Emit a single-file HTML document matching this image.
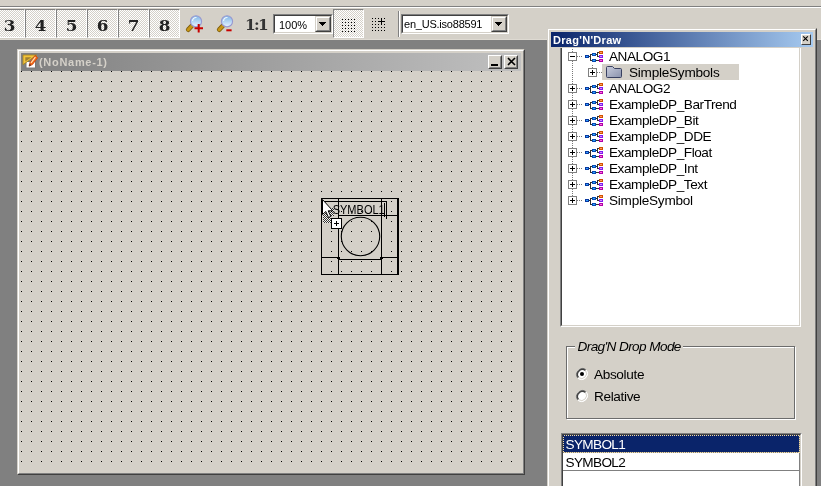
<!DOCTYPE html>
<html><head><meta charset="utf-8"><title>Drag'N'Draw</title>
<style>
html,body{margin:0;padding:0;background:#808080;}
body{width:821px;height:486px;overflow:hidden;position:relative;background:#808080;font-family:"Liberation Sans",sans-serif;font-size:11px;color:#000;}
div,span,i,b{box-sizing:border-box;}
.abs{position:absolute;}
#toolbar{position:absolute;left:0;top:0;width:821px;height:40px;background:#d4d0c8;}
#tbline1{position:absolute;left:0;top:6px;width:821px;height:1px;background:#808080;}
#tbline2{position:absolute;left:0;top:7px;width:821px;height:1px;background:#fff;}
#tbline3{position:absolute;left:0;top:39px;width:821px;height:1px;background:#dedad2;}
.tbtn{position:absolute;top:9px;width:31px;height:29px;border:1px solid;border-color:#808080 #fff #fff #808080;
 background-image:repeating-conic-gradient(#fff 0 25%,#d4d0c8 0 50%);background-size:2px 2px;}
.tbtn span{position:absolute;left:0;top:6px;width:29px;transform:scaleX(1.12);text-align:center;font-family:"DejaVu Serif","Liberation Serif",serif;font-weight:bold;font-size:15px;line-height:20px;color:#222;}
#oneone{position:absolute;left:245.3px;top:15px;width:22px;transform:scaleX(1.1);text-align:center;font-family:"DejaVu Serif","Liberation Serif",serif;font-weight:bold;font-size:14px;line-height:20px;color:#333;letter-spacing:-1.5px;white-space:nowrap;}
.combo{position:absolute;top:14px;height:20px;background:#fff;border:1px solid;border-color:#808080 #fff #fff #808080;}
.combo .in{position:absolute;left:0;top:0;right:0;bottom:0;border:1px solid;border-color:#404040 #d4d0c8 #d4d0c8 #404040;}
.combo .txt{position:absolute;left:4px;top:2px;font-size:11px;line-height:13px;white-space:nowrap;}
.combo .dd{position:absolute;right:1px;top:1px;width:16px;height:16px;background:#d4d0c8;border:1px solid;border-color:#d4d0c8 #404040 #404040 #d4d0c8;}
.combo .dd i{position:absolute;left:0;top:0;right:0;bottom:0;border:1px solid;border-color:#fff #808080 #808080 #fff;}
.combo .dd b{position:absolute;left:3px;top:5px;width:7px;height:4px;background:linear-gradient(#000,#000) 0 0/7px 1px no-repeat,linear-gradient(#000,#000) 1px 1px/5px 1px no-repeat,linear-gradient(#000,#000) 2px 2px/3px 1px no-repeat,linear-gradient(#000,#000) 3px 3px/1px 1px no-repeat;}
.sep{position:absolute;left:398px;top:11px;width:2px;height:26px;border-left:1px solid #808080;border-right:1px solid #fff;}
/* child window */
#child{position:absolute;left:17px;top:49px;width:508px;height:426px;background:#d4d0c8;border:1px solid;border-color:#d4d0c8 #404040 #404040 #d4d0c8;}
#child .fr{position:absolute;left:0;top:0;right:0;bottom:0;border:1px solid;border-color:#fff #808080 #808080 #fff;}
#ctitle{position:absolute;left:21px;top:53px;width:500px;height:18px;background:linear-gradient(to right,#808080,#c0c0c0);}
#ctitle .t{position:absolute;left:17.5px;top:2px;letter-spacing:0.7px;font-weight:bold;font-size:11px;line-height:14px;color:#d4d0c8;white-space:nowrap;}
.cbtn{position:absolute;top:2px;width:14px;height:14px;background:#d4d0c8;border:1px solid;border-color:#fff #404040 #404040 #fff;}
.cbtn i{position:absolute;left:0;top:0;right:0;bottom:0;border:1px solid;border-color:#d4d0c8 #808080 #808080 #d4d0c8;}
#canvas{position:absolute;left:21px;top:71px;width:500px;height:400px;background:#d4d0c8;}
/* panel */
#panel{position:absolute;left:547px;top:28px;width:270px;height:470px;background:#d4d0c8;border:1px solid;border-color:#d4d0c8 #404040 #404040 #d4d0c8;}
#panel .fr{position:absolute;left:0;top:0;right:0;bottom:0;border:1px solid;border-color:#fff #808080 #808080 #fff;}
#ptitle{position:absolute;left:551px;top:32px;width:262px;height:15px;background:linear-gradient(to right,#0a246a,#a6caf0);}
#ptitle .t{position:absolute;left:1.5px;top:2px;letter-spacing:0.3px;font-weight:bold;font-size:11px;line-height:13px;color:#fff;white-space:nowrap;}
#pclose{position:absolute;left:801px;top:34px;width:10px;height:11px;background:#d4d0c8;border:1px solid;border-color:#fff #404040 #404040 #fff;}
#tree{position:absolute;left:560px;top:48px;width:241px;height:279px;background:#fff;border-left:1px solid #808080;border-right:1px solid #fff;border-bottom:1px solid #fff;}
#tree .fr{position:absolute;left:0;top:0;right:0;bottom:0;border-left:1px solid #404040;border-right:1px solid #d4d0c8;border-bottom:1px solid #d4d0c8;}
.tl{position:absolute;font-size:13.6px;line-height:16px;height:16px;white-space:nowrap;letter-spacing:-0.45px;}
#hl{position:absolute;left:602px;top:64px;width:137px;height:16px;background:#d4d0c8;}
#gb{position:absolute;left:567px;top:347px;width:229px;height:73px;border:1px solid #fff;}
#gb i{position:absolute;left:-2px;top:-2px;right:0;bottom:0;border:1px solid #6c6c6c;}
#gbt{position:absolute;left:575px;top:339px;padding:0 2px 0 2.5px;background:#d4d0c8;font-style:italic;font-size:13.6px;line-height:16px;white-space:nowrap;letter-spacing:-0.6px;}
.rl{position:absolute;left:594px;font-size:13.6px;line-height:16px;white-space:nowrap;letter-spacing:-0.35px;}
#lb{position:absolute;left:561px;top:433px;width:241px;height:70px;background:#fff;border:1px solid;border-color:#808080 #fff #fff #808080;}
#lb .fr{position:absolute;left:0;top:0;right:0;bottom:0;border:1px solid;border-color:#404040 #d4d0c8 #d4d0c8 #404040;}
.lr{position:absolute;left:563px;width:237px;height:18px;font-size:13.6px;line-height:19px;padding-left:2.5px;border-bottom:1px solid #808080;border-right:1px solid #808080;white-space:nowrap;letter-spacing:-0.65px;}
#ov{position:absolute;left:0;top:0;width:821px;height:486px;}
.tl,.txt,.t,.rl,.lr,#gbt,.tbtn span,#oneone,#ov{will-change:transform;}
</style></head><body>

<div id="toolbar"><div id="tbline1"></div><div id="tbline2"></div><div id="tbline3"></div>
<div class="tbtn" style="left:-6px"><span>3</span></div>
<div class="tbtn" style="left:25px"><span>4</span></div>
<div class="tbtn" style="left:56px"><span>5</span></div>
<div class="tbtn" style="left:87px"><span>6</span></div>
<div class="tbtn" style="left:118px"><span>7</span></div>
<div class="tbtn" style="left:149px"><span>8</span></div>
<div id="oneone">1:1</div>
<div class="combo" style="left:273px;width:60px"><div class="in"></div><span class="txt" style="left:4.5px;top:4px">100%</span><div class="dd"><i></i><b></b></div></div>
<div class="tbtn" style="left:333px"></div>
<div class="sep"></div>
<div class="combo" style="left:401px;width:108px"><div class="in"></div><span class="txt" style="left:2px;top:3px;letter-spacing:-0.22px">en_US.iso88591</span><div class="dd"><i></i><b></b></div></div>
</div>
<div id="child"><div class="fr"></div></div>
<div id="ctitle"><span class="t">(NoName-1)</span><div class="cbtn" style="left:467px"><i></i></div><div class="cbtn" style="left:483px"><i></i></div></div>
<div id="canvas"></div>
<div id="panel"><div class="fr"></div></div>
<div id="ptitle"><span class="t">Drag'N'Draw</span></div><div id="pclose"></div>
<div id="tree"><div class="fr"></div></div>
<div id="hl"></div>
<div class="tl" style="left:609px;top:49px">ANALOG1</div>
<div class="tl" style="left:629px;top:65px;letter-spacing:-0.25px">SimpleSymbols</div>
<div class="tl" style="left:609px;top:81px">ANALOG2</div>
<div class="tl" style="left:609px;top:97px">ExampleDP_BarTrend</div>
<div class="tl" style="left:609px;top:113px">ExampleDP_Bit</div>
<div class="tl" style="left:609px;top:129px">ExampleDP_DDE</div>
<div class="tl" style="left:609px;top:145px">ExampleDP_Float</div>
<div class="tl" style="left:609px;top:161px">ExampleDP_Int</div>
<div class="tl" style="left:609px;top:177px">ExampleDP_Text</div>
<div class="tl" style="left:609px;top:193px;letter-spacing:-0.25px">SimpleSymbol</div>
<div id="gb"><i></i></div><div id="gbt">Drag'N Drop Mode</div>
<div class="rl" style="top:367px">Absolute</div><div class="rl" style="top:389px">Relative</div>
<div id="lb"><div class="fr"></div></div>
<div class="lr" style="top:435px;background:#0a246a;color:#fff">SYMBOL1</div>
<div class="lr" style="top:453px">SYMBOL2</div>
<div class="lr" style="top:471px"></div>
<svg id="ov" width="821" height="486" viewBox="0 0 821 486">
<defs><pattern id="grid" x="21" y="71" width="10" height="10" patternUnits="userSpaceOnUse"><rect x="0" y="0" width="1" height="1" fill="#000"/></pattern><pattern id="dith" x="0" y="0" width="2" height="2" patternUnits="userSpaceOnUse"><rect x="0" y="0" width="2" height="2" fill="#fff"/><rect x="0" y="0" width="1" height="1" fill="#000"/><rect x="1" y="1" width="1" height="1" fill="#000"/></pattern><linearGradient id="lens" x1="0" y1="0" x2="0" y2="1"><stop offset="0" stop-color="#7db4e6"/><stop offset="1" stop-color="#e8f4ff"/></linearGradient><linearGradient id="fold" x1="0" y1="0" x2="1" y2="1"><stop offset="0" stop-color="#c8ccdc"/><stop offset="1" stop-color="#8a92ac"/></linearGradient></defs>
<rect x="21" y="71" width="500" height="400" fill="url(#grid)" shape-rendering="crispEdges"/>
<g><line x1="192.0" y1="25.700000000000003" x2="188.2" y2="29.700000000000003" stroke="#7c5c0c" stroke-width="4.6" stroke-linecap="round"/><line x1="192.0" y1="25.700000000000003" x2="188.2" y2="29.700000000000003" stroke="#c89614" stroke-width="3" stroke-linecap="round"/><circle cx="196" cy="21.3" r="5.6" fill="url(#lens)" stroke="#9898d0" stroke-width="1.1"/><path d="M192.5 20.8 A3.8 3.8 0 0 1 196.5 17.5" stroke="#fff" stroke-width="1.2" fill="none" opacity="0.9"/>
<path d="M194.5 28.3H203M198.7 24V32.4" stroke="#c80000" stroke-width="2" fill="none"/></g>
<g><line x1="223.0" y1="25.700000000000003" x2="219.2" y2="29.700000000000003" stroke="#7c5c0c" stroke-width="4.6" stroke-linecap="round"/><line x1="223.0" y1="25.700000000000003" x2="219.2" y2="29.700000000000003" stroke="#c89614" stroke-width="3" stroke-linecap="round"/><circle cx="227" cy="21.3" r="5.6" fill="url(#lens)" stroke="#9898d0" stroke-width="1.1"/><path d="M223.5 20.8 A3.8 3.8 0 0 1 227.5 17.5" stroke="#fff" stroke-width="1.2" fill="none" opacity="0.9"/>
<path d="M226.3 30.3H231.6" stroke="#c80000" stroke-width="2" fill="none"/></g>
<g fill="#000" shape-rendering="crispEdges"><rect x="342" y="19" width="1" height="1"/><rect x="345" y="19" width="1" height="1"/><rect x="348" y="19" width="1" height="1"/><rect x="351" y="19" width="1" height="1"/><rect x="354" y="19" width="1" height="1"/><rect x="342" y="22" width="1" height="1"/><rect x="345" y="22" width="1" height="1"/><rect x="348" y="22" width="1" height="1"/><rect x="351" y="22" width="1" height="1"/><rect x="354" y="22" width="1" height="1"/><rect x="342" y="25" width="1" height="1"/><rect x="345" y="25" width="1" height="1"/><rect x="348" y="25" width="1" height="1"/><rect x="351" y="25" width="1" height="1"/><rect x="354" y="25" width="1" height="1"/><rect x="342" y="28" width="1" height="1"/><rect x="345" y="28" width="1" height="1"/><rect x="348" y="28" width="1" height="1"/><rect x="351" y="28" width="1" height="1"/><rect x="354" y="28" width="1" height="1"/><rect x="342" y="31" width="1" height="1"/><rect x="345" y="31" width="1" height="1"/><rect x="348" y="31" width="1" height="1"/><rect x="351" y="31" width="1" height="1"/><rect x="354" y="31" width="1" height="1"/></g>
<g fill="#000" shape-rendering="crispEdges"><rect x="372" y="18" width="1" height="1"/><rect x="375" y="18" width="1" height="1"/><rect x="378" y="18" width="1" height="1"/><rect x="384" y="18" width="1" height="1"/><rect x="372" y="21" width="1" height="1"/><rect x="375" y="21" width="1" height="1"/><rect x="372" y="24" width="1" height="1"/><rect x="375" y="24" width="1" height="1"/><rect x="378" y="24" width="1" height="1"/><rect x="384" y="24" width="1" height="1"/><rect x="372" y="27" width="1" height="1"/><rect x="375" y="27" width="1" height="1"/><rect x="378" y="27" width="1" height="1"/><rect x="381" y="27" width="1" height="1"/><rect x="384" y="27" width="1" height="1"/><rect x="372" y="30" width="1" height="1"/><rect x="375" y="30" width="1" height="1"/><rect x="378" y="30" width="1" height="1"/><rect x="381" y="30" width="1" height="1"/><rect x="384" y="30" width="1" height="1"/><rect x="378" y="21" width="7" height="1"/><rect x="381" y="18" width="1" height="7"/></g>
<g><rect x="26" y="61.5" width="9.5" height="6.5" fill="#fff" stroke="#787878" stroke-width="1"/><path d="M23 55H36.8L23 64.6Z" fill="#f2c43c" stroke="#a88418" stroke-width="0.8"/><path d="M25.3 57.3H31.5L25.3 61.6Z" fill="#a08030"/><path d="M35.2 55.2L37.8 57.8L32.6 64.6L29 66.2L30 62.2Z" fill="#f06414" stroke="#c43c08" stroke-width="0.6"/><path d="M35.4 57.2L31 62.8" stroke="#ffe0b0" stroke-width="1.3" fill="none"/><path d="M29 66.2L29.6 63.6L31.2 65.2Z" fill="#503020"/></g>
<g fill="#000" shape-rendering="crispEdges"><rect x="491" y="64" width="7" height="2"/></g>
<path d="M508 58L515 65M515 58L508 65" stroke="#000" stroke-width="1.6" fill="none"/>
<path d="M803.2 36.3L807.8 40.9M807.8 36.3L803.2 40.9" stroke="#000" stroke-width="1.1" fill="none"/>
<g fill="#787878" shape-rendering="crispEdges"><rect x="572" y="49" width="1" height="1"/><rect x="572" y="51" width="1" height="1"/><rect x="572" y="53" width="1" height="1"/><rect x="572" y="55" width="1" height="1"/><rect x="572" y="57" width="1" height="1"/><rect x="572" y="59" width="1" height="1"/><rect x="572" y="61" width="1" height="1"/><rect x="572" y="63" width="1" height="1"/><rect x="572" y="65" width="1" height="1"/><rect x="572" y="67" width="1" height="1"/><rect x="572" y="69" width="1" height="1"/><rect x="572" y="71" width="1" height="1"/><rect x="572" y="73" width="1" height="1"/><rect x="572" y="75" width="1" height="1"/><rect x="572" y="77" width="1" height="1"/><rect x="572" y="79" width="1" height="1"/><rect x="572" y="81" width="1" height="1"/><rect x="572" y="83" width="1" height="1"/><rect x="572" y="85" width="1" height="1"/><rect x="572" y="87" width="1" height="1"/><rect x="572" y="89" width="1" height="1"/><rect x="572" y="91" width="1" height="1"/><rect x="572" y="93" width="1" height="1"/><rect x="572" y="95" width="1" height="1"/><rect x="572" y="97" width="1" height="1"/><rect x="572" y="99" width="1" height="1"/><rect x="572" y="101" width="1" height="1"/><rect x="572" y="103" width="1" height="1"/><rect x="572" y="105" width="1" height="1"/><rect x="572" y="107" width="1" height="1"/><rect x="572" y="109" width="1" height="1"/><rect x="572" y="111" width="1" height="1"/><rect x="572" y="113" width="1" height="1"/><rect x="572" y="115" width="1" height="1"/><rect x="572" y="117" width="1" height="1"/><rect x="572" y="119" width="1" height="1"/><rect x="572" y="121" width="1" height="1"/><rect x="572" y="123" width="1" height="1"/><rect x="572" y="125" width="1" height="1"/><rect x="572" y="127" width="1" height="1"/><rect x="572" y="129" width="1" height="1"/><rect x="572" y="131" width="1" height="1"/><rect x="572" y="133" width="1" height="1"/><rect x="572" y="135" width="1" height="1"/><rect x="572" y="137" width="1" height="1"/><rect x="572" y="139" width="1" height="1"/><rect x="572" y="141" width="1" height="1"/><rect x="572" y="143" width="1" height="1"/><rect x="572" y="145" width="1" height="1"/><rect x="572" y="147" width="1" height="1"/><rect x="572" y="149" width="1" height="1"/><rect x="572" y="151" width="1" height="1"/><rect x="572" y="153" width="1" height="1"/><rect x="572" y="155" width="1" height="1"/><rect x="572" y="157" width="1" height="1"/><rect x="572" y="159" width="1" height="1"/><rect x="572" y="161" width="1" height="1"/><rect x="572" y="163" width="1" height="1"/><rect x="572" y="165" width="1" height="1"/><rect x="572" y="167" width="1" height="1"/><rect x="572" y="169" width="1" height="1"/><rect x="572" y="171" width="1" height="1"/><rect x="572" y="173" width="1" height="1"/><rect x="572" y="175" width="1" height="1"/><rect x="572" y="177" width="1" height="1"/><rect x="572" y="179" width="1" height="1"/><rect x="572" y="181" width="1" height="1"/><rect x="572" y="183" width="1" height="1"/><rect x="572" y="185" width="1" height="1"/><rect x="572" y="187" width="1" height="1"/><rect x="572" y="189" width="1" height="1"/><rect x="572" y="191" width="1" height="1"/><rect x="572" y="193" width="1" height="1"/><rect x="572" y="195" width="1" height="1"/><rect x="572" y="197" width="1" height="1"/><rect x="572" y="199" width="1" height="1"/><rect x="577" y="56" width="1" height="1"/><rect x="579" y="56" width="1" height="1"/><rect x="581" y="56" width="1" height="1"/><rect x="577" y="88" width="1" height="1"/><rect x="579" y="88" width="1" height="1"/><rect x="581" y="88" width="1" height="1"/><rect x="577" y="104" width="1" height="1"/><rect x="579" y="104" width="1" height="1"/><rect x="581" y="104" width="1" height="1"/><rect x="577" y="120" width="1" height="1"/><rect x="579" y="120" width="1" height="1"/><rect x="581" y="120" width="1" height="1"/><rect x="577" y="136" width="1" height="1"/><rect x="579" y="136" width="1" height="1"/><rect x="581" y="136" width="1" height="1"/><rect x="577" y="152" width="1" height="1"/><rect x="579" y="152" width="1" height="1"/><rect x="581" y="152" width="1" height="1"/><rect x="577" y="168" width="1" height="1"/><rect x="579" y="168" width="1" height="1"/><rect x="581" y="168" width="1" height="1"/><rect x="577" y="184" width="1" height="1"/><rect x="579" y="184" width="1" height="1"/><rect x="581" y="184" width="1" height="1"/><rect x="577" y="200" width="1" height="1"/><rect x="579" y="200" width="1" height="1"/><rect x="581" y="200" width="1" height="1"/><rect x="592" y="65" width="1" height="1"/><rect x="592" y="67" width="1" height="1"/><rect x="597" y="72" width="1" height="1"/><rect x="599" y="72" width="1" height="1"/><rect x="601" y="72" width="1" height="1"/></g>
<g shape-rendering="crispEdges"><rect x="568" y="52" width="9" height="9" fill="#fff"/><path d="M568.5 52.5H576.5V60.5H568.5Z" fill="none" stroke="#808080"/><rect x="570" y="56" width="5" height="1" fill="#000"/><rect x="588" y="68" width="9" height="9" fill="#fff"/><path d="M588.5 68.5H596.5V76.5H588.5Z" fill="none" stroke="#808080"/><rect x="590" y="72" width="5" height="1" fill="#000"/><rect x="592" y="70" width="1" height="5" fill="#000"/><rect x="568" y="84" width="9" height="9" fill="#fff"/><path d="M568.5 84.5H576.5V92.5H568.5Z" fill="none" stroke="#808080"/><rect x="570" y="88" width="5" height="1" fill="#000"/><rect x="572" y="86" width="1" height="5" fill="#000"/><rect x="568" y="100" width="9" height="9" fill="#fff"/><path d="M568.5 100.5H576.5V108.5H568.5Z" fill="none" stroke="#808080"/><rect x="570" y="104" width="5" height="1" fill="#000"/><rect x="572" y="102" width="1" height="5" fill="#000"/><rect x="568" y="116" width="9" height="9" fill="#fff"/><path d="M568.5 116.5H576.5V124.5H568.5Z" fill="none" stroke="#808080"/><rect x="570" y="120" width="5" height="1" fill="#000"/><rect x="572" y="118" width="1" height="5" fill="#000"/><rect x="568" y="132" width="9" height="9" fill="#fff"/><path d="M568.5 132.5H576.5V140.5H568.5Z" fill="none" stroke="#808080"/><rect x="570" y="136" width="5" height="1" fill="#000"/><rect x="572" y="134" width="1" height="5" fill="#000"/><rect x="568" y="148" width="9" height="9" fill="#fff"/><path d="M568.5 148.5H576.5V156.5H568.5Z" fill="none" stroke="#808080"/><rect x="570" y="152" width="5" height="1" fill="#000"/><rect x="572" y="150" width="1" height="5" fill="#000"/><rect x="568" y="164" width="9" height="9" fill="#fff"/><path d="M568.5 164.5H576.5V172.5H568.5Z" fill="none" stroke="#808080"/><rect x="570" y="168" width="5" height="1" fill="#000"/><rect x="572" y="166" width="1" height="5" fill="#000"/><rect x="568" y="180" width="9" height="9" fill="#fff"/><path d="M568.5 180.5H576.5V188.5H568.5Z" fill="none" stroke="#808080"/><rect x="570" y="184" width="5" height="1" fill="#000"/><rect x="572" y="182" width="1" height="5" fill="#000"/><rect x="568" y="196" width="9" height="9" fill="#fff"/><path d="M568.5 196.5H576.5V204.5H568.5Z" fill="none" stroke="#808080"/><rect x="570" y="200" width="5" height="1" fill="#000"/><rect x="572" y="198" width="1" height="5" fill="#000"/></g>
<g shape-rendering="crispEdges"><path d="M589 56.5H590.5M590.5 54V60.5M590 54.5H592M590 60.5H592M596 54.5H597.5M597.5 52V57M597 52.5H599M597 56.5H599M596 60.5H599" stroke="#303030" stroke-width="1" fill="none"/><rect x="585" y="55" width="4" height="3" fill="#0838a0"/><rect x="586" y="56" width="2" height="1" fill="#30a0ff"/><rect x="592" y="53" width="4" height="3" fill="#0848b0"/><rect x="593" y="54" width="2" height="1" fill="#30a8ff"/><rect x="592" y="59" width="4" height="3" fill="#0848b0"/><rect x="593" y="60" width="2" height="1" fill="#30a8ff"/><rect x="599" y="51" width="4" height="3" fill="#d05000"/><rect x="600" y="52" width="2" height="1" fill="#ffa060"/><rect x="599" y="55" width="4" height="3" fill="#8018f0"/><rect x="600" y="56" width="2" height="1" fill="#d090ff"/><rect x="599" y="59" width="4" height="3" fill="#b000a8"/><rect x="600" y="60" width="2" height="1" fill="#ff70e0"/></g>
<g shape-rendering="crispEdges"><path d="M589 88.5H590.5M590.5 86V92.5M590 86.5H592M590 92.5H592M596 86.5H597.5M597.5 84V89M597 84.5H599M597 88.5H599M596 92.5H599" stroke="#303030" stroke-width="1" fill="none"/><rect x="585" y="87" width="4" height="3" fill="#0838a0"/><rect x="586" y="88" width="2" height="1" fill="#30a0ff"/><rect x="592" y="85" width="4" height="3" fill="#0848b0"/><rect x="593" y="86" width="2" height="1" fill="#30a8ff"/><rect x="592" y="91" width="4" height="3" fill="#0848b0"/><rect x="593" y="92" width="2" height="1" fill="#30a8ff"/><rect x="599" y="83" width="4" height="3" fill="#d05000"/><rect x="600" y="84" width="2" height="1" fill="#ffa060"/><rect x="599" y="87" width="4" height="3" fill="#8018f0"/><rect x="600" y="88" width="2" height="1" fill="#d090ff"/><rect x="599" y="91" width="4" height="3" fill="#b000a8"/><rect x="600" y="92" width="2" height="1" fill="#ff70e0"/></g>
<g shape-rendering="crispEdges"><path d="M589 104.5H590.5M590.5 102V108.5M590 102.5H592M590 108.5H592M596 102.5H597.5M597.5 100V105M597 100.5H599M597 104.5H599M596 108.5H599" stroke="#303030" stroke-width="1" fill="none"/><rect x="585" y="103" width="4" height="3" fill="#0838a0"/><rect x="586" y="104" width="2" height="1" fill="#30a0ff"/><rect x="592" y="101" width="4" height="3" fill="#0848b0"/><rect x="593" y="102" width="2" height="1" fill="#30a8ff"/><rect x="592" y="107" width="4" height="3" fill="#0848b0"/><rect x="593" y="108" width="2" height="1" fill="#30a8ff"/><rect x="599" y="99" width="4" height="3" fill="#d05000"/><rect x="600" y="100" width="2" height="1" fill="#ffa060"/><rect x="599" y="103" width="4" height="3" fill="#8018f0"/><rect x="600" y="104" width="2" height="1" fill="#d090ff"/><rect x="599" y="107" width="4" height="3" fill="#b000a8"/><rect x="600" y="108" width="2" height="1" fill="#ff70e0"/></g>
<g shape-rendering="crispEdges"><path d="M589 120.5H590.5M590.5 118V124.5M590 118.5H592M590 124.5H592M596 118.5H597.5M597.5 116V121M597 116.5H599M597 120.5H599M596 124.5H599" stroke="#303030" stroke-width="1" fill="none"/><rect x="585" y="119" width="4" height="3" fill="#0838a0"/><rect x="586" y="120" width="2" height="1" fill="#30a0ff"/><rect x="592" y="117" width="4" height="3" fill="#0848b0"/><rect x="593" y="118" width="2" height="1" fill="#30a8ff"/><rect x="592" y="123" width="4" height="3" fill="#0848b0"/><rect x="593" y="124" width="2" height="1" fill="#30a8ff"/><rect x="599" y="115" width="4" height="3" fill="#d05000"/><rect x="600" y="116" width="2" height="1" fill="#ffa060"/><rect x="599" y="119" width="4" height="3" fill="#8018f0"/><rect x="600" y="120" width="2" height="1" fill="#d090ff"/><rect x="599" y="123" width="4" height="3" fill="#b000a8"/><rect x="600" y="124" width="2" height="1" fill="#ff70e0"/></g>
<g shape-rendering="crispEdges"><path d="M589 136.5H590.5M590.5 134V140.5M590 134.5H592M590 140.5H592M596 134.5H597.5M597.5 132V137M597 132.5H599M597 136.5H599M596 140.5H599" stroke="#303030" stroke-width="1" fill="none"/><rect x="585" y="135" width="4" height="3" fill="#0838a0"/><rect x="586" y="136" width="2" height="1" fill="#30a0ff"/><rect x="592" y="133" width="4" height="3" fill="#0848b0"/><rect x="593" y="134" width="2" height="1" fill="#30a8ff"/><rect x="592" y="139" width="4" height="3" fill="#0848b0"/><rect x="593" y="140" width="2" height="1" fill="#30a8ff"/><rect x="599" y="131" width="4" height="3" fill="#d05000"/><rect x="600" y="132" width="2" height="1" fill="#ffa060"/><rect x="599" y="135" width="4" height="3" fill="#8018f0"/><rect x="600" y="136" width="2" height="1" fill="#d090ff"/><rect x="599" y="139" width="4" height="3" fill="#b000a8"/><rect x="600" y="140" width="2" height="1" fill="#ff70e0"/></g>
<g shape-rendering="crispEdges"><path d="M589 152.5H590.5M590.5 150V156.5M590 150.5H592M590 156.5H592M596 150.5H597.5M597.5 148V153M597 148.5H599M597 152.5H599M596 156.5H599" stroke="#303030" stroke-width="1" fill="none"/><rect x="585" y="151" width="4" height="3" fill="#0838a0"/><rect x="586" y="152" width="2" height="1" fill="#30a0ff"/><rect x="592" y="149" width="4" height="3" fill="#0848b0"/><rect x="593" y="150" width="2" height="1" fill="#30a8ff"/><rect x="592" y="155" width="4" height="3" fill="#0848b0"/><rect x="593" y="156" width="2" height="1" fill="#30a8ff"/><rect x="599" y="147" width="4" height="3" fill="#d05000"/><rect x="600" y="148" width="2" height="1" fill="#ffa060"/><rect x="599" y="151" width="4" height="3" fill="#8018f0"/><rect x="600" y="152" width="2" height="1" fill="#d090ff"/><rect x="599" y="155" width="4" height="3" fill="#b000a8"/><rect x="600" y="156" width="2" height="1" fill="#ff70e0"/></g>
<g shape-rendering="crispEdges"><path d="M589 168.5H590.5M590.5 166V172.5M590 166.5H592M590 172.5H592M596 166.5H597.5M597.5 164V169M597 164.5H599M597 168.5H599M596 172.5H599" stroke="#303030" stroke-width="1" fill="none"/><rect x="585" y="167" width="4" height="3" fill="#0838a0"/><rect x="586" y="168" width="2" height="1" fill="#30a0ff"/><rect x="592" y="165" width="4" height="3" fill="#0848b0"/><rect x="593" y="166" width="2" height="1" fill="#30a8ff"/><rect x="592" y="171" width="4" height="3" fill="#0848b0"/><rect x="593" y="172" width="2" height="1" fill="#30a8ff"/><rect x="599" y="163" width="4" height="3" fill="#d05000"/><rect x="600" y="164" width="2" height="1" fill="#ffa060"/><rect x="599" y="167" width="4" height="3" fill="#8018f0"/><rect x="600" y="168" width="2" height="1" fill="#d090ff"/><rect x="599" y="171" width="4" height="3" fill="#b000a8"/><rect x="600" y="172" width="2" height="1" fill="#ff70e0"/></g>
<g shape-rendering="crispEdges"><path d="M589 184.5H590.5M590.5 182V188.5M590 182.5H592M590 188.5H592M596 182.5H597.5M597.5 180V185M597 180.5H599M597 184.5H599M596 188.5H599" stroke="#303030" stroke-width="1" fill="none"/><rect x="585" y="183" width="4" height="3" fill="#0838a0"/><rect x="586" y="184" width="2" height="1" fill="#30a0ff"/><rect x="592" y="181" width="4" height="3" fill="#0848b0"/><rect x="593" y="182" width="2" height="1" fill="#30a8ff"/><rect x="592" y="187" width="4" height="3" fill="#0848b0"/><rect x="593" y="188" width="2" height="1" fill="#30a8ff"/><rect x="599" y="179" width="4" height="3" fill="#d05000"/><rect x="600" y="180" width="2" height="1" fill="#ffa060"/><rect x="599" y="183" width="4" height="3" fill="#8018f0"/><rect x="600" y="184" width="2" height="1" fill="#d090ff"/><rect x="599" y="187" width="4" height="3" fill="#b000a8"/><rect x="600" y="188" width="2" height="1" fill="#ff70e0"/></g>
<g shape-rendering="crispEdges"><path d="M589 200.5H590.5M590.5 198V204.5M590 198.5H592M590 204.5H592M596 198.5H597.5M597.5 196V201M597 196.5H599M597 200.5H599M596 204.5H599" stroke="#303030" stroke-width="1" fill="none"/><rect x="585" y="199" width="4" height="3" fill="#0838a0"/><rect x="586" y="200" width="2" height="1" fill="#30a0ff"/><rect x="592" y="197" width="4" height="3" fill="#0848b0"/><rect x="593" y="198" width="2" height="1" fill="#30a8ff"/><rect x="592" y="203" width="4" height="3" fill="#0848b0"/><rect x="593" y="204" width="2" height="1" fill="#30a8ff"/><rect x="599" y="195" width="4" height="3" fill="#d05000"/><rect x="600" y="196" width="2" height="1" fill="#ffa060"/><rect x="599" y="199" width="4" height="3" fill="#8018f0"/><rect x="600" y="200" width="2" height="1" fill="#d090ff"/><rect x="599" y="203" width="4" height="3" fill="#b000a8"/><rect x="600" y="204" width="2" height="1" fill="#ff70e0"/></g>
<path d="M606.5 67.5Q606.5 66.5 607.5 66.5H612.5L614.5 68.5H620.5Q621.5 68.5 621.5 69.5V76.5Q621.5 77.5 620.5 77.5H607.5Q606.5 77.5 606.5 76.5Z" fill="url(#fold)" stroke="#384060" stroke-width="1"/>
<circle cx="582" cy="374" r="5.5" fill="#fff"/><path d="M577.8 378.2A6 6 0 0 1 586.2 369.8" stroke="#808080" stroke-width="1" fill="none"/><path d="M578.5 377.5A5 5 0 0 1 585.5 370.5" stroke="#404040" stroke-width="1.4" fill="none"/><path d="M586.2 369.8A6 6 0 0 1 577.8 378.2" stroke="#fff" stroke-width="1" fill="none"/><path d="M585.5 370.5A5 5 0 0 1 578.5 377.5" stroke="#d4d0c8" stroke-width="1" fill="none"/><circle cx="582" cy="374" r="2" fill="#000"/>
<circle cx="582" cy="396" r="5.5" fill="#fff"/><path d="M577.8 400.2A6 6 0 0 1 586.2 391.8" stroke="#808080" stroke-width="1" fill="none"/><path d="M578.5 399.5A5 5 0 0 1 585.5 392.5" stroke="#404040" stroke-width="1.4" fill="none"/><path d="M586.2 391.8A6 6 0 0 1 577.8 400.2" stroke="#fff" stroke-width="1" fill="none"/><path d="M585.5 392.5A5 5 0 0 1 578.5 399.5" stroke="#d4d0c8" stroke-width="1" fill="none"/>
<rect x="563.5" y="435.5" width="236" height="17" fill="none" stroke="#f5dba0" stroke-width="1" stroke-dasharray="1 1" shape-rendering="crispEdges"/>
<g shape-rendering="crispEdges" fill="none" stroke="#000" stroke-width="1"><rect x="321.5" y="198.5" width="76.5" height="76"/><path d="M397.5 198V275M338.5 198V275M381 198V275M321 257.5H338M338 259.5H381M381 257.5H398M338 215.5H398M322 201.5H386.5V218.5M384.5 203V217"/><rect x="337" y="257" width="3" height="2" fill="#000" stroke="none"/><rect x="380" y="257" width="3" height="2" fill="#000" stroke="none"/></g>
<circle cx="360.5" cy="236.5" r="19.2" fill="none" stroke="#000" stroke-width="1.1"/>
<path d="M323 213H327V208H334V216H331V223H323Z" fill="url(#dith)" opacity="0.75" shape-rendering="crispEdges"/>
<text x="332.7" y="213.6" font-family="Liberation Sans, sans-serif" font-size="12" fill="#000" textLength="52" lengthAdjust="spacingAndGlyphs">SYMBOL1</text>
<path d="M322.5 199.5V214.5L325.8 211.5L328.5 217.5L330.8 216.5L328.2 210.8H332.8Z" fill="#fff" stroke="#000" stroke-width="1"/>
<g shape-rendering="crispEdges"><rect x="331.5" y="218.5" width="10" height="10" fill="#fff" stroke="#000"/><rect x="334" y="223" width="5" height="1" fill="#000"/><rect x="336" y="221" width="1" height="5" fill="#000"/></g>
</svg>
</body></html>
